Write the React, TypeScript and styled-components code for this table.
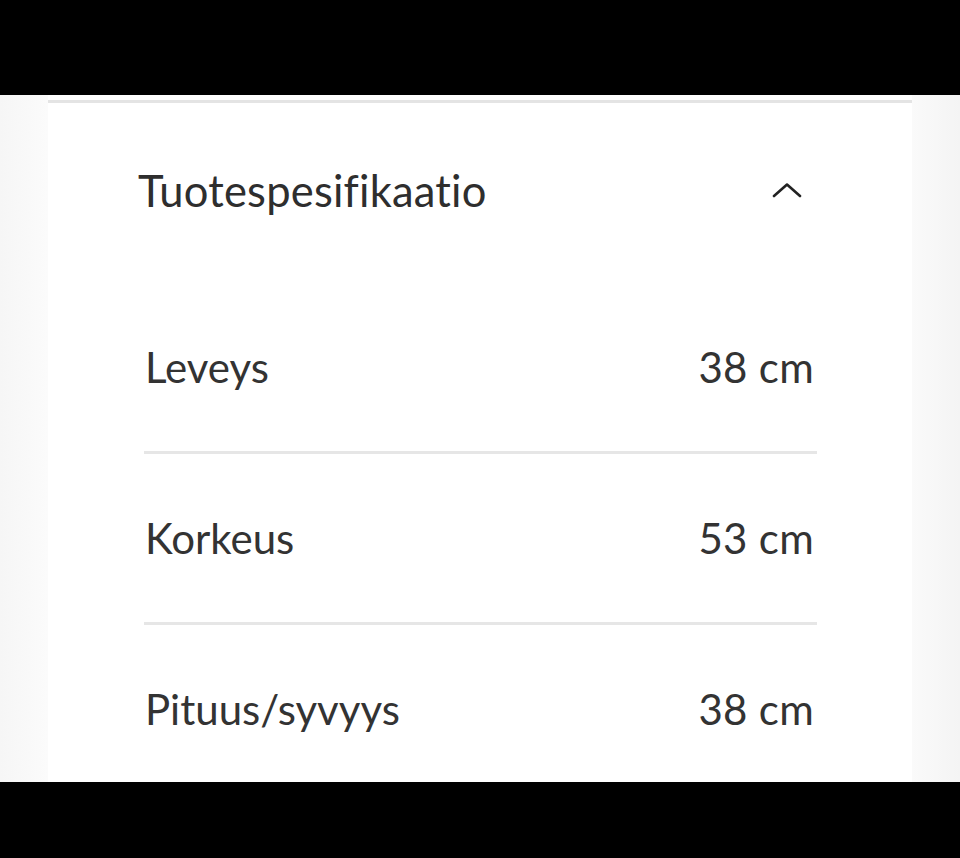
import React from "react";
import styled, { createGlobalStyle } from "styled-components";

const Global = createGlobalStyle`
  html, body { margin: 0; padding: 0; background: #000; }
  body { font-family: Lato, "Noto Sans", sans-serif; }
`;

const Frame = styled.div`
  width: 960px;
  height: 858px;
  display: flex;
  flex-direction: column;
  background: #000;
  overflow: hidden;
`;

const TopBar = styled.div`
  height: 95px;
  flex: none;
  background: #000;
`;

const BottomBar = styled.div`
  height: 76px;
  flex: none;
  background: #000;
`;

const Screen = styled.div`
  height: 687px;
  flex: none;
  background: linear-gradient(90deg, #f6f6f6 0px, #fbfbfb 48px, #fff 48px, #fff 912px, #fafafa 912px, #f4f4f4 960px);
  padding-top: 5px;
  box-sizing: border-box;
  overflow: hidden;
  display: flex;
  justify-content: flex-start;
  align-items: flex-start;
`;

const Card = styled.section`
  margin-left: 48px;
  width: 864px;
  background: #fff;
  border-top: 3px solid #e4e4e4;
  display: flex;
  flex-direction: column;
  flex: none;
`;

const Header = styled.div`
  height: 180px;
  flex: none;
  box-sizing: border-box;
  padding: 0 110px 6px 90px;
  display: flex;
  align-items: center;
  justify-content: space-between;
`;

const Title = styled.h2`
  margin: 0;
  font-size: 43.5px;
  font-weight: 400;
  color: #2e2e2e;
  letter-spacing: 0.2px;
`;

const Chevron = styled.svg`
  width: 30px;
  height: 15px;
  display: block;
`;

const List = styled.div`
  display: flex;
  flex-direction: column;
  flex: none;
  padding: 0 95px 0 96px;
`;

const Row = styled.div<{ $last?: boolean }>`
  height: 168px;
  flex: none;
  display: flex;
  align-items: center;
  justify-content: space-between;
  border-bottom: ${(p) => (p.$last ? "none" : "3px solid #e6e6e6")};
  font-size: 42px;
  color: #333;
`;

const Label = styled.span`
  padding-left: 1px;
`;

const Value = styled.span`
  padding-right: 3px;
  letter-spacing: 0.3px;
`;

const specs = [
  { label: "Leveys", value: "38 cm" },
  { label: "Korkeus", value: "53 cm" },
  { label: "Pituus/syvyys", value: "38 cm" },
];

export default function App() {
  return (
    <>
      <Global />
      <Frame>
        <TopBar />
        <Screen>
          <Card>
            <Header>
              <Title>Tuotespesifikaatio</Title>
              <Chevron viewBox="0 0 30 15">
                <polyline
                  points="2,13 15,1.5 28,13"
                  fill="none"
                  stroke="#222"
                  strokeWidth="2.6"
                  strokeLinecap="round"
                  strokeLinejoin="round"
                />
              </Chevron>
            </Header>
            <List>
              {specs.map((s, i) => (
                <Row key={s.label} $last={i === specs.length - 1}>
                  <Label>{s.label}</Label>
                  <Value>{s.value}</Value>
                </Row>
              ))}
            </List>
          </Card>
        </Screen>
        <BottomBar />
      </Frame>
    </>
  );
}
